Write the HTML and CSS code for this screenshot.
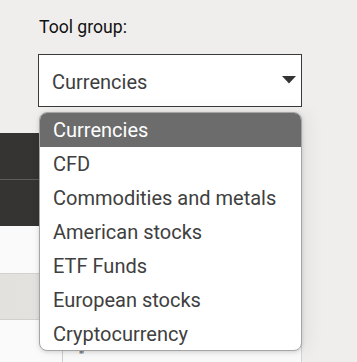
FILE: index.html
```html
<!DOCTYPE html>
<html lang="en">
<head>
    <meta charset="UTF-8">
    <meta name="viewport" content="width=device-width, initial-scale=1.0">
    <title>Tool group</title>
    <link rel="stylesheet" href="styles.css">
</head>
<body>
    <div class="page">
        <div class="field">
            <label class="field-label" for="toolGroup">Tool group:</label>
            <div class="select" id="toolGroup">
                <span class="select-value">Currencies</span>
                <svg class="select-arrow" width="14" height="8" viewBox="0 0 14 8">
                    <path d="M0 0 H14 L7 7.5 Z" fill="#333"/>
                </svg>
            </div>

            <ul class="dropdown">
                <li class="dropdown-item active">Currencies</li>
                <li class="dropdown-item">CFD</li>
                <li class="dropdown-item">Commodities and metals</li>
                <li class="dropdown-item">American stocks</li>
                <li class="dropdown-item">ETF Funds</li>
                <li class="dropdown-item">European stocks</li>
                <li class="dropdown-item">Cryptocurrency</li>
            </ul>
        </div>

        <div class="tabs">
            <div class="tab"></div>
            <div class="tab"></div>
        </div>

        <div class="table">
            <div class="row"></div>
            <div class="row shaded"></div>
            <div class="row split">
                <div class="cell first"></div>
                <div class="cell"><span class="cell-text">"'</span></div>
            </div>
        </div>
    </div>
</body>
</html>
```

FILE: styles.css
```css
* {
    box-sizing: border-box;
    margin: 0;
    padding: 0;
}

body {
    font-family: Roboto, "Liberation Sans", Arial, sans-serif;
    background-color: #efeeed;
    color: #111;
    overflow: hidden;
}

.page {
    width: 302px;
    min-height: 362px;
}

.field {
    position: relative;
    padding: 17px 0 0 38px;
}

.field-label {
    display: block;
    font-size: 17.6px;
    line-height: 20px;
    color: #111;
    margin-left: 1px;
}

.select {
    margin-top: 17px;
    width: 264px;
    height: 53px;
    background-color: #fff;
    border: 1px solid #3a3a3a;
    display: flex;
    align-items: center;
    justify-content: space-between;
    padding: 0 5px 0 13px;
}

.select-value {
    font-size: 20px;
    color: #3e3e3e;
    padding-top: 2px;
}

.select-arrow {
    margin-bottom: 2px;
}

.dropdown {
    list-style: none;
    position: absolute;
    top: 112px;
    left: 39px;
    width: 263px;
    height: 239px;
    background-color: #fff;
    border: 1px solid #a5a5a5;
    border-radius: 8px;
    overflow: hidden;
    box-shadow: 0 1px 4px rgba(0, 0, 0, 0.15), 6px 0 18px rgba(0, 0, 0, 0.06);
    z-index: 2;
}

.dropdown-item {
    height: 34px;
    line-height: 34px;
    padding-left: 13px;
    font-size: 20px;
    color: #404040;
    white-space: nowrap;
}

.dropdown-item.active {
    background-color: #6c6c6c;
    color: #fff;
}

.tabs {
    margin-top: 26px;
}

.tab {
    height: 46px;
    background-color: #363432;
}

.tab + .tab {
    border-top: 1px solid #5e5c5a;
    height: 47px;
}

.table {
    background-color: #fafafa;
    border-right: 1px solid #d4d4d4;
}

.row {
    height: 47px;
}

.row.shaded {
    background: linear-gradient(to right, #e3e1de, #e8e6e3);
    border-top: 1px solid #d2d0cd;
    border-bottom: 1px solid #d2d0cd;
}

.row.split {
    display: flex;
    height: 44px;
}

.cell.first {
    width: 63px;
    border-right: 1px solid #cfcfcf;
}

.cell-text {
    display: block;
    padding: 30px 0 0 16px;
    font-size: 11px;
    line-height: 11px;
    color: #333;
}
```
